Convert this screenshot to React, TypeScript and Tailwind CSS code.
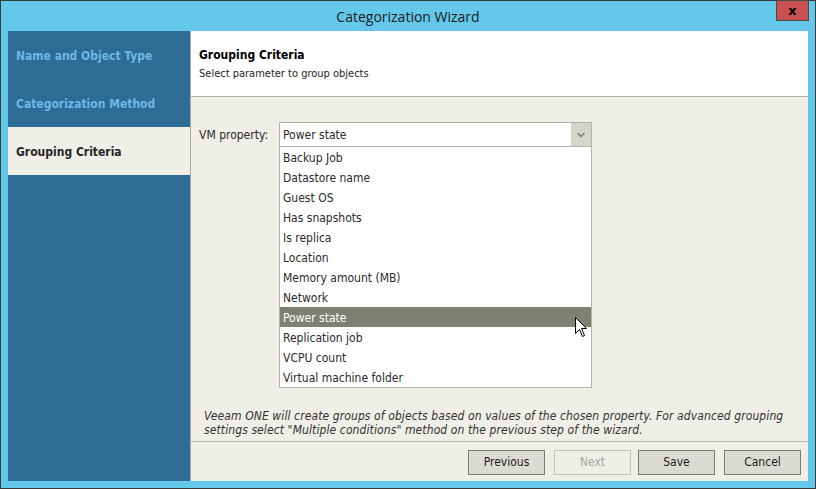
import { ChevronDown } from 'lucide-react';

const steps = [
  { label: 'Name and Object Type', active: false },
  { label: 'Categorization Method', active: false },
  { label: 'Grouping Criteria', active: true },
];

const options = [
  'Backup Job',
  'Datastore name',
  'Guest OS',
  'Has snapshots',
  'Is replica',
  'Location',
  'Memory amount (MB)',
  'Network',
  'Power state',
  'Replication job',
  'VCPU count',
  'Virtual machine folder',
];

const font = "font-['Tahoma','DejaVu_Sans_Condensed','DejaVu_Sans',sans-serif]";

function Cursor() {
  return (
    <svg className="pointer-events-none absolute left-[574px] top-[316px]" width="13" height="21" viewBox="0 0 13 21">
      <path d="M0.5 0.5 L0.5 16.5 L4.5 12.5 L7.5 19.5 L9.5 18.5 L6.5 11.5 L11.5 11.5 Z" fill="#fff" stroke="#000" strokeWidth="1" />
    </svg>
  );
}

function WizardButton({ children, disabled, className = '' }: { children: string; disabled?: boolean; className?: string }) {
  return (
    <button
      className={
        (disabled
          ? 'h-[25px] w-[77px] border border-[#c4c3bb] bg-[#efeee7] text-[12px] text-[#a6a6a0] '
          : 'h-[25px] w-[77px] border border-[#7b7b74] bg-[#dcdbd3] text-[12px] text-[#1c1c1c] ') + className
      }
    >
      {children}
    </button>
  );
}

export default function App() {
  return (
    <div className={`relative flex h-[489px] w-[816px] flex-col border border-[#3a3a3a] bg-[#63c8e9] ${font}`}>
      {/* Title bar */}
      <div className="relative flex h-[30px] items-center justify-center">
        <span className="font-['Open_Sans','Noto_Sans',sans-serif] text-[14px] text-[#1b1b1b]">Categorization Wizard</span>
        <div className="absolute right-[6px] top-[-1px] flex h-[21px] w-[33px] items-center justify-center border border-[#4a4a4a] bg-[#c75050]">
          <span className="font-['DejaVu_Sans',sans-serif] text-[13px] font-bold leading-none text-black">x</span>
        </div>
      </div>

      <div className="mx-[7px] mb-[7px] flex flex-1">
        {/* Steps */}
        <div className="flex w-[182px] flex-col bg-[#2d6c94]">
          {steps.map((s) => (
            <div
              key={s.label}
              className={
                s.active
                  ? 'flex h-[48px] items-center bg-[#efeee7] pl-[8px] pt-[2px] text-[12px] font-bold text-[#262626]'
                  : 'flex h-[48px] items-center pl-[8px] pt-[2px] text-[12px] font-bold text-[#6cb9e8]'
              }
            >
              {s.label}
            </div>
          ))}
        </div>

        {/* Main panel */}
        <div className="flex flex-1 flex-col border-l border-[#a9a9a9] bg-[#efeee7]">
          <div className="flex h-[66px] flex-col border-b border-[#b3b3b0] bg-white pl-[8px] pt-[16px]">
            <div className="text-[12px] font-bold leading-[16px] text-black">Grouping Criteria</div>
            <div className="mt-[3px] text-[11px] leading-[16px] text-[#1e1e1e]">Select parameter to group objects</div>
          </div>

          <div className="flex flex-1 flex-col pl-[8px] pt-[25px]">
            <div className="flex items-start">
              <div className="flex h-[25px] w-[80px] items-center pt-[1px] text-[12px] text-[#2a2a2a]">VM property:</div>
              <div className="flex w-[313px] flex-col">
                <div className="flex h-[25px] border border-[#b3b3ad] bg-white">
                  <div className="flex flex-1 items-center pl-[3px] pt-[1px] text-[12px] text-[#2a2a2a]">Power state</div>
                  <div className="flex w-[20px] items-center justify-center bg-[#d6d5cc]">
                    <ChevronDown size={12} strokeWidth={3} className="text-[#7b7b72]" />
                  </div>
                </div>
                <div className="flex flex-col border border-t-0 border-[#b3b3ad] bg-white">
                  {options.map((o) => (
                    <div
                      key={o}
                      className={
                        o === 'Power state'
                          ? 'flex h-[20px] items-center bg-[#7f7f72] pl-[3px] pt-[2px] text-[12px] text-white'
                          : 'flex h-[20px] items-center pl-[3px] pt-[2px] text-[12px] text-[#2a2a2a]'
                      }
                    >
                      {o}
                    </div>
                  ))}
                </div>
              </div>
            </div>

            <div className="mt-auto pb-[4px] pl-[5px] pr-[10px] text-[12px] italic leading-[14px] tracking-[0.1px] text-[#333]">
              Veeam ONE will create groups of objects based on values of the chosen property. For advanced grouping
              settings select "Multiple conditions" method on the previous step of the wizard.
            </div>
          </div>

          <div className="flex h-[40px] items-center justify-end border-t border-[#b8b8b3] pr-[7px] pt-[1px]">
            <WizardButton>Previous</WizardButton>
            <WizardButton disabled className="ml-[9px]">Next</WizardButton>
            <WizardButton className="ml-[7px]">Save</WizardButton>
            <WizardButton className="ml-[9px]">Cancel</WizardButton>
          </div>
        </div>
      </div>

      <Cursor />
    </div>
  );
}
